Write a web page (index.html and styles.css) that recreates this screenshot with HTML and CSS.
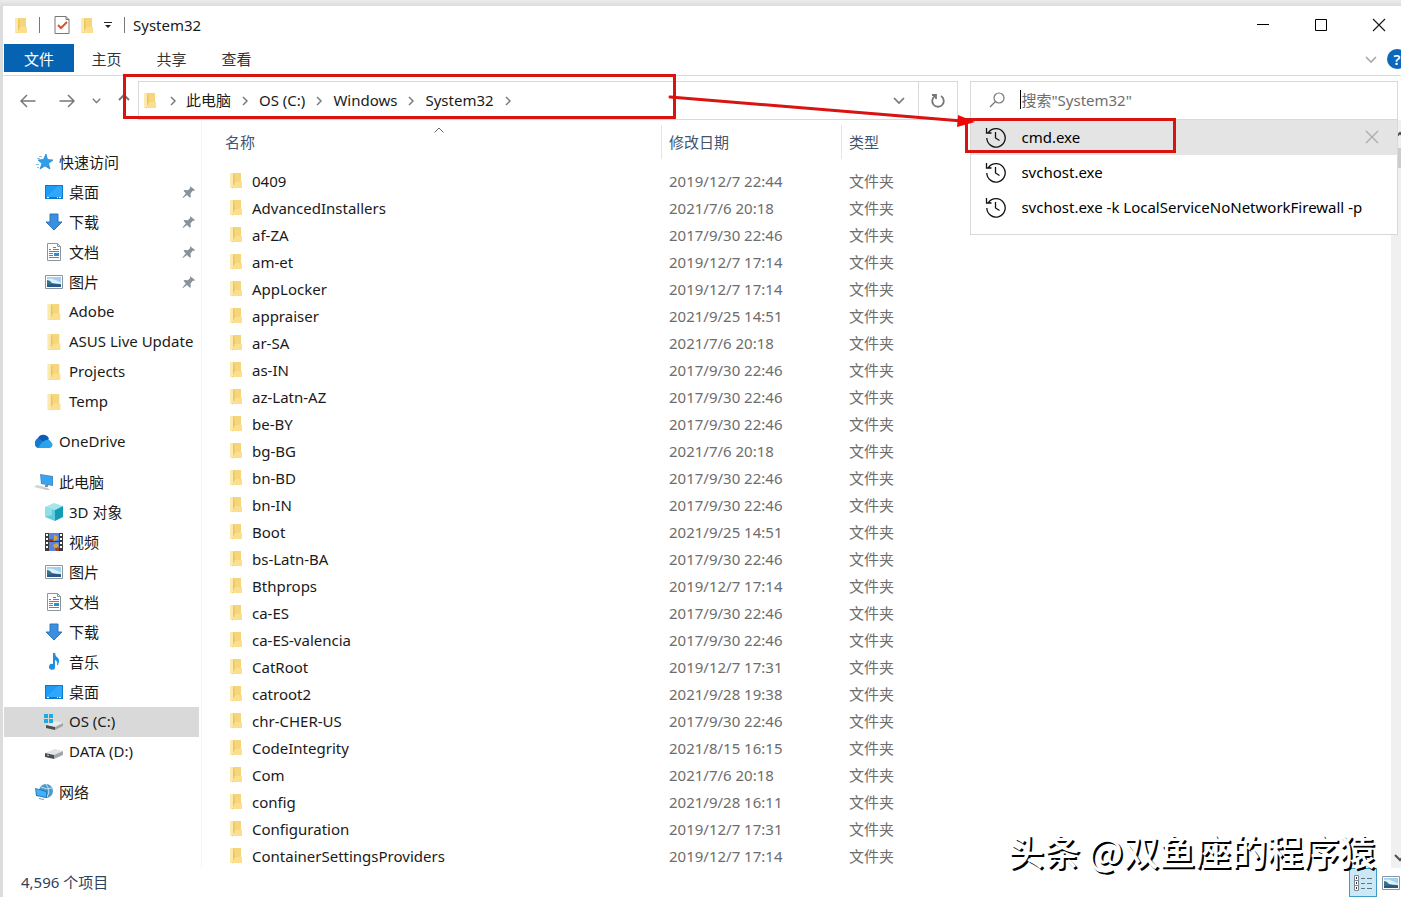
FILE: index.html
```html
<!DOCTYPE html>
<html lang="zh-CN">
<head>
    <meta charset="UTF-8">
    <meta name="viewport" content="width=device-width, initial-scale=1.0">
    <title>System32</title>
    <link rel="stylesheet" href="styles.css">
</head>
<body>
    <svg class="symbols" aria-hidden="true">
        <symbol id="folder" viewBox="0 0 12 17">
            <path d="M0 1h4l1 1v14H0z" fill="#fae7a5"/>
            <path d="M4 1h7v11H4z" fill="#f5d67c"/>
            <path d="M4 1l1 9-3 7V3z" fill="#ecc65f"/>
            <path d="M5 10h7v6H3z" fill="#fbdf8e"/>
            <path d="M0 1h3v14H0z" fill="#fbe9ad"/>
        </symbol>
        <symbol id="desktop" viewBox="0 0 18 18">
            <path d="M0 2h18v14H0z" fill="#0f78c8"/>
            <path d="M1 3h16v11H1z" fill="#1e9cf5"/>
            <path d="M1 14L13 3h4v11z" fill="#2fa8fb"/>
            <path d="M2 14h2v1H2zM12 14h1v1h-1zM14 14h2v1h-2z" fill="#fff"/>
        </symbol>
        <symbol id="download" viewBox="0 0 18 18">
            <path d="M5 1h8v8h4l-8 8-8-8h4z" fill="#3c8fdf" stroke="#2b76c2"/>
        </symbol>
        <symbol id="document" viewBox="0 0 18 18">
            <path d="M2.500.5h10l3 3v14h-13z" fill="#fff" stroke="#8a979e"/>
            <path d="M12.500.5v3h3" fill="none" stroke="#8a979e"/>
            <path d="M4 6.500h2M8 4.500h3M8 6.500h6M4 8.500h10M4 10.500h4M4 12.500h4M4 14.500h10" stroke="#3e8fc4"/>
            <path d="M9 10h5v3H9z" fill="#2b8fd8"/>
        </symbol>
        <symbol id="picture" viewBox="0 0 18 18">
            <path d="M.5 2.500h17v13H.5z" fill="#fff" stroke="#8b969c"/>
            <path d="M2 4h14v10H2z" fill="#9fd1f2"/>
            <path d="M2 6q5-2 14 4v2H2z" fill="#e1f1fa"/>
            <path d="M2 7q3 0 5 3 4 1 9 1v3H2z" fill="#37748a"/>
            <path d="M2 12q8-2 14 0v2H2z" fill="#28588a"/>
        </symbol>
        <symbol id="star" viewBox="0 0 18 18">
            <path d="M11 1l1.500 5.500 5.500.5-4.500 3.500L15 16l-5-3-5 3 2-5.500L3 7l5.500-.5z" fill="#2f9ee9" stroke="#1b83cf" stroke-width=".7"/>
            <path d="M4 3.500h3M2 5.500h3M1 11.500h3M2 14.500h2" stroke="#7cc6f4"/>
        </symbol>
        <symbol id="cloud" viewBox="0 0 20 14">
            <path d="M5 12a5 5 0 0 1-1-9 6 6 0 0 1 11 1l-8 8z" fill="#0b5cb5"/>
            <path d="M1 9a4 4 0 0 1 5-5l9 6-9 3H4a4 4 0 0 1-3-4z" fill="#1479d2"/>
            <path d="M4 13q4-7 8-8 4-1 5 2a3.300 3.300 0 0 1-1 6z" fill="#2aa3ea"/>
        </symbol>
        <symbol id="computer" viewBox="0 0 20 18">
            <path d="M6 1l13 2v10L7 11z" fill="#4a8fc4"/>
            <path d="M7 2l11 2v8L8 10z" fill="#35a5f3"/>
            <path d="M11 12h3v2h-3z" fill="#7e8c95"/>
            <path d="M3 12l11 3-2 2-12-3z" fill="#cfd4d8"/>
            <path d="M9 15l7 1-2 1z" fill="#aab2b8"/>
        </symbol>
        <symbol id="cube" viewBox="0 0 18 18">
            <path d="M9 0l9 3-8 4-10-3z" fill="#a4e6ec"/>
            <path d="M0 4l10 3v11L0 14z" fill="#5fcbd8"/>
            <path d="M10 7l8-4v11l-8 4z" fill="#149cb5"/>
            <path d="M0 4l7 2v6l-7 2z" fill="#8edfe7"/>
        </symbol>
        <symbol id="video" viewBox="0 0 18 18">
            <path d="M0 0h18v18H0z" fill="#3b3b3b"/>
            <path d="M4 0h10v8H4zM4 9h10v9H4z" fill="#5a83df"/>
            <path d="M9 2l3 1 1 3-4 2zM8 12l4-2 2 3-4 3z" fill="#d2a735"/>
            <path d="M4 6h4v2H4zM10 15h4v3h-3z" fill="#a03d2c"/>
            <path d="M1 1h2v2H1zm0 4h2v2H1zm0 4h2v2H1zm0 4h2v2H1zM15 1h2v2h-2zm0 4h2v2h-2zm0 4h2v2h-2zm0 4h2v2h-2z" fill="#fff"/>
        </symbol>
        <symbol id="music" viewBox="0 0 18 18">
            <path d="M8 0h2q0 3 3 5 2 2 0 7h-1q1-4-2-5v7a3 3 0 1 1-2-3z" fill="#1d8fe1"/>
        </symbol>
        <symbol id="drive" viewBox="0 0 20 18">
            <path d="M1 10l10-4 8 2-9 4z" fill="#e2e4e5"/>
            <path d="M1 10l9 2v4l-9-2z" fill="#4b4f52"/>
            <path d="M10 12l9-4v4l-9 4z" fill="#a3a7a9"/>
            <path d="M3 12l2 .5" stroke="#a9d99a"/>
        </symbol>
        <symbol id="osdrive" viewBox="0 0 20 18">
            <path d="M3 12l9-4 7 2-8 4z" fill="#e9ebec"/>
            <path d="M2 12l9 2v3l-9-2z" fill="#4b4f52"/>
            <path d="M11 14l8-4v3l-8 4z" fill="#a3a7a9"/>
            <path d="M0 1h4v4H0zM5 1h4v4H5zM0 6h4v4H0zM5 6h4v4H5z" fill="#19ade5"/>
        </symbol>
        <symbol id="network" viewBox="0 0 20 18">
            <circle cx="12" cy="8" r="7" fill="#4e99cb"/>
            <path d="M7 4q5 3 11 1M12 1q5 7 1 13" fill="none" stroke="#bfe0f2"/>
            <path d="M1 5l12 3v7L2 13z" fill="#1f7ec4"/>
            <path d="M2 6l10 3v5l-9-2z" fill="#42b1f6"/>
            <path d="M5 15l5 1v1l-5-1z" fill="#8996a0"/>
        </symbol>
        <symbol id="pin" viewBox="0 0 14 14">
            <path d="M8 1l5 4-1 1-1-.4-2.500 2.900.3 3.500-1 .7-2.800-2.800L1 13l-.5-.5 3.300-4L1.500 5.800l1-.9 3.300.3L8.300 3z" fill="#87929c"/>
        </symbol>
        <symbol id="chevron" viewBox="0 0 8 10">
            <path d="M2 1l4 4-4 4" fill="none" stroke="#7d7d7d" stroke-width="1.500"/>
        </symbol>
        <symbol id="chevron-down" viewBox="0 0 12 8">
            <path d="M1 1l5 5 5-5" fill="none" stroke="currentColor" stroke-width="1.700"/>
        </symbol>
        <symbol id="history" viewBox="0 0 22 22">
            <path d="M3.500 6.500A9.200 9.200 0 1 1 1.800 12M1.500 2v5h5M10.500 6v6l4 2.500" fill="none" stroke="#111" stroke-width="1.300"/>
        </symbol>
        <symbol id="cross" viewBox="0 0 14 14">
            <path d="M1 1l12 12M13 1L1 13" fill="none" stroke="currentColor" stroke-width="1.200"/>
        </symbol>
    </svg>

    <div class="window">
        <header class="titlebar">
            <svg class="folder"><use href="#folder"/></svg>
            <span class="divider"></span>
            <button class="quick" aria-label="属性">
                <svg width="16" height="18" viewBox="0 0 16 18">
                    <path d="M1 .5h11l3 3v14H1z" fill="#fff" stroke="#777"/>
                    <path d="M12 .5v3h3" fill="none" stroke="#777"/>
                    <path d="M4 9l3 3 6-6" fill="none" stroke="#d9532c" stroke-width="2"/>
                </svg>
            </button>
            <button class="quick" aria-label="新建文件夹"><svg class="folder"><use href="#folder"/></svg></button>
            <button class="quick" aria-label="自定义快速访问工具栏">
                <svg width="8" height="8" viewBox="0 0 8 8"><path d="M0 1.500h8" stroke="#222"/><path d="M1 4h6L4 7z" fill="#222"/></svg>
            </button>
            <span class="divider"></span>
            <h1>System32</h1>
            <div class="controls">
                <button aria-label="最小化"><svg width="14" height="14"><path d="M1 6.500h12" stroke="#000"/></svg></button>
                <button aria-label="最大化"><svg width="14" height="14"><path d="M1.500 1.500h11v11h-11z" fill="none" stroke="#000"/></svg></button>
                <button aria-label="关闭"><svg width="14" height="14"><use href="#cross"/></svg></button>
            </div>
        </header>

        <div class="tabs">
            <button class="tab file">文件</button>
            <button class="tab">主页</button>
            <button class="tab">共享</button>
            <button class="tab">查看</button>
            <button class="expand" aria-label="展开功能区"><svg width="14" height="8"><use href="#chevron-down"/></svg></button>
            <button class="help" aria-label="帮助">?</button>
        </div>

        <div class="navbar">
            <div class="arrows">
                <button aria-label="后退"><svg width="16" height="14"><path d="M15.500 7H1M7 1L1 7l6 6" fill="none" stroke="#777" stroke-width="1.500"/></svg></button>
                <button aria-label="前进"><svg width="16" height="14"><path d="M.5 7H15M9 1l6 6-6 6" fill="none" stroke="#777" stroke-width="1.500"/></svg></button>
                <button class="recent" aria-label="最近浏览的位置"><svg width="9" height="6"><use href="#chevron-down"/></svg></button>
                <button aria-label="上移"><svg width="12" height="14"><path d="M6 14V1M1 6l5-5 5 5" fill="none" stroke="#777" stroke-width="2"/></svg></button>
            </div>
            <div class="address">
                <svg class="folder"><use href="#folder"/></svg>
                <svg class="chevron"><use href="#chevron"/></svg>
                <a href="#">此电脑</a>
                <svg class="chevron"><use href="#chevron"/></svg>
                <a href="#">OS (C:)</a>
                <svg class="chevron"><use href="#chevron"/></svg>
                <a href="#">Windows</a>
                <svg class="chevron"><use href="#chevron"/></svg>
                <a href="#">System32</a>
                <svg class="chevron"><use href="#chevron"/></svg>
                <button class="history" aria-label="以前的位置"><svg width="12" height="8"><use href="#chevron-down"/></svg></button>
                <button class="refresh" aria-label="刷新">
                    <svg width="16" height="16"><path d="M11 3a5.800 5.800 0 1 1-6 0M2 2h4v4" fill="none" stroke="#777" stroke-width="1.800"/></svg>
                </button>
            </div>
            <div class="search">
                <label class="field">
                    <svg width="16" height="16"><circle cx="10" cy="6" r="5" fill="none" stroke="#777" stroke-width="1.200"/><path d="M6.500 9.500L1 15" stroke="#777" stroke-width="1.200"/></svg>
                    <input type="text" placeholder='搜索"System32"' aria-label="搜索">
                </label>
                <ul class="suggestions">
                    <li class="current">
                        <svg width="22" height="22"><use href="#history"/></svg>
                        <span>cmd.exe</span>
                        <button aria-label="删除"><svg width="14" height="14"><use href="#cross"/></svg></button>
                    </li>
                    <li><svg width="22" height="22"><use href="#history"/></svg><span>svchost.exe</span></li>
                    <li><svg width="22" height="22"><use href="#history"/></svg><span>svchost.exe -k LocalServiceNoNetworkFirewall -p</span></li>
                </ul>
            </div>
        </div>

        <div class="content">
            <nav class="sidebar">
                <ul>
                    <li><a class="root" href="#"><svg><use href="#star"/></svg>快速访问</a></li>
                    <li><a href="#"><svg><use href="#desktop"/></svg>桌面<svg class="pin"><use href="#pin"/></svg></a></li>
                    <li><a href="#"><svg><use href="#download"/></svg>下载<svg class="pin"><use href="#pin"/></svg></a></li>
                    <li><a href="#"><svg><use href="#document"/></svg>文档<svg class="pin"><use href="#pin"/></svg></a></li>
                    <li><a href="#"><svg><use href="#picture"/></svg>图片<svg class="pin"><use href="#pin"/></svg></a></li>
                    <li><a href="#"><svg><use href="#folder"/></svg>Adobe</a></li>
                    <li><a href="#"><svg><use href="#folder"/></svg>ASUS Live Update</a></li>
                    <li><a href="#"><svg><use href="#folder"/></svg>Projects</a></li>
                    <li><a href="#"><svg><use href="#folder"/></svg>Temp</a></li>
                </ul>
                <ul>
                    <li><a class="root" href="#"><svg><use href="#cloud"/></svg>OneDrive</a></li>
                </ul>
                <ul>
                    <li><a class="root" href="#"><svg><use href="#computer"/></svg>此电脑</a></li>
                    <li><a href="#"><svg><use href="#cube"/></svg>3D 对象</a></li>
                    <li><a href="#"><svg><use href="#video"/></svg>视频</a></li>
                    <li><a href="#"><svg><use href="#picture"/></svg>图片</a></li>
                    <li><a href="#"><svg><use href="#document"/></svg>文档</a></li>
                    <li><a href="#"><svg><use href="#download"/></svg>下载</a></li>
                    <li><a href="#"><svg><use href="#music"/></svg>音乐</a></li>
                    <li><a href="#"><svg><use href="#desktop"/></svg>桌面</a></li>
                    <li><a class="selected" href="#"><svg><use href="#osdrive"/></svg>OS (C:)</a></li>
                    <li><a href="#"><svg><use href="#drive"/></svg>DATA (D:)</a></li>
                </ul>
                <ul>
                    <li><a class="root" href="#"><svg><use href="#network"/></svg>网络</a></li>
                </ul>
            </nav>
            <main class="files">
                <table>
                    <colgroup><col class="col-name"><col class="col-date"><col></colgroup>
                    <thead>
                        <tr>
                            <th>
                                <span>名称</span>
                                <svg class="sort" width="10" height="6"><path d="M.5 5.500L5 1l4.500 4.500" fill="none" stroke="#666"/></svg>
                            </th>
                            <th><span>修改日期</span></th>
                            <th><span>类型</span></th>
                        </tr>
                    </thead>
                    <tbody id="rows"></tbody>
                </table>
            </main>
            <div class="scrollbar">
                <svg width="17" height="28"><path d="M4 18l5-5 5 5" fill="none" stroke="#505050" stroke-width="2"/></svg>
                <div class="thumb"></div>
                <svg class="down" width="17" height="18"><path d="M4 5l5 5 5-5" fill="none" stroke="#505050" stroke-width="2"/></svg>
            </div>
        </div>

        <footer class="status">
            <span>4,596 个项目</span>
            <button class="view on" aria-label="详细信息">
                <svg width="18" height="18">
                    <path d="M.5 1.500h4v15h-4zM.5 6.500h4M.5 11.500h4" fill="#fff" stroke="#7d8890"/>
                    <path d="M2 4h1M2 9h1M2 14h1" stroke="#333" stroke-width="2"/>
                    <path d="M7 4.500h4M13 4.500h5M7 9.500h4M13 9.500h5M7 14.500h4M13 14.500h5" stroke="#5f7782"/>
                </svg>
            </button>
            <button class="view" aria-label="大缩略图"><svg width="18" height="18"><use href="#picture"/></svg></button>
        </footer>
    </div>

    <svg class="marks" aria-hidden="true">
        <path d="M124.500 75.500h550v42h-550zM966.500 119.500h208v32h-208z" fill="none" stroke="#d9130f" stroke-width="3"/>
        <path d="M670 97l292 24" stroke="#d9130f" stroke-width="3" stroke-linecap="round"/>
        <path d="M958 115l17 7-18 5z" fill="#f00808"/>
    </svg>
    <div class="watermark">头条 @双鱼座的程序猿</div>

    <script src="script.js"></script>
</body>
</html>
```
FILE: styles.css
```css
* {
    box-sizing: border-box;
}
body, html {
    margin: 0;
    padding: 0;
    height: 100%;
    overflow: hidden;
}
body {
    position: relative;
    background: linear-gradient(#ececec, #dcdcdc 6px, #dcdcdc);
    font-family: "Noto Sans", "Noto Sans CJK SC", sans-serif;
    font-size: 15px;
    color: #1a1a1a;
}
button {
    padding: 0;
    border: 0;
    background: none;
    font: inherit;
    color: inherit;
    display: flex;
    align-items: center;
    justify-content: center;
}
a {
    color: inherit;
    text-decoration: none;
}
ul {
    list-style: none;
    margin: 0;
    padding: 0;
}
svg {
    display: block;
    flex: none;
}
.symbols {
    position: absolute;
    width: 0;
    height: 0;
}
.folder {
    width: 12px;
    height: 17px;
}
.window {
    height: 100%;
    padding: 6px 0 0 3px;
    display: flex;
    flex-direction: column;
    background: #fff content-box;
}

/* title bar */
.titlebar {
    height: 38px;
    flex: none;
    display: flex;
    align-items: center;
    padding-left: 12px;
    background: #fff;
}
.titlebar h1 {
    margin: 0 0 0 8px;
    font-size: 15px;
    font-weight: 400;
}
.divider {
    width: 1px;
    height: 16px;
    margin-left: 12px;
    background: #777;
}
.quick {
    margin-left: 11px;
}
.divider + .quick {
    margin-left: 14px;
}
.controls {
    margin: 0 -7px 0 auto;
    display: flex;
}
.controls button {
    width: 58px;
    height: 38px;
}

/* ribbon tabs */
.tabs {
    height: 32px;
    flex: none;
    display: flex;
    padding-left: 1px;
    border-bottom: 1px solid #dadbdc;
    color: #333;
}
.tab {
    width: 65px;
    height: 28px;
}
.tab.file {
    width: 70px;
    background: #0563b1;
    color: #fff;
}
.expand {
    margin-left: auto;
    color: #aaa;
}
.help {
    width: 20px;
    height: 20px;
    margin: 5px -6px 0 9px;
    border-radius: 50%;
    background: #0b68bb;
    color: #fff;
    font-weight: 600;
}

/* address row */
.navbar {
    height: 44px;
    flex: none;
    display: flex;
    padding: 5px 3px 0 0;
}
.arrows {
    width: 135px;
    padding-left: 17px;
    display: flex;
    align-items: center;
    gap: 23px;
}
.arrows .recent {
    color: #777;
    margin: 0 -6px;
}
.address, .search {
    border: 1px solid #d9d9d9;
    background: #fff;
}
.address {
    flex: 820 1 0;
    display: flex;
    align-items: center;
    padding-left: 5px;
}
.address a {
    padding-bottom: 2px;
}
.address .chevron {
    width: 8px;
    height: 10px;
    margin: 0 10px;
}
.address .folder + .chevron {
    margin: 0 9px 0 13px;
}
.address .history {
    margin-left: auto;
    width: 38px;
    color: #777;
}
.address .refresh {
    width: 39px;
    height: 100%;
    border-left: 1px solid #d9d9d9;
}
.search {
    position: relative;
    flex: 429 1 0;
    margin-left: 12px;
}
.field {
    height: 100%;
    display: flex;
    align-items: center;
    padding: 0 0 2px 18px;
}
.field::after {
    content: "";
    order: 1;
    width: 1px;
    height: 19px;
    margin-left: 15px;
    background: #000;
}
.field input {
    order: 2;
    flex: 1;
    min-width: 0;
    padding: 0;
    border: 0;
    outline: 0;
    font: inherit;
}
.field input::placeholder {
    color: #6d6d6d;
}
.suggestions {
    position: absolute;
    z-index: 2;
    top: 37px;
    left: -1px;
    right: -1px;
    padding-bottom: 9px;
    border: 1px solid #d9d9d9;
    background: #fff;
    color: #000;
}
.suggestions li {
    height: 35px;
    display: flex;
    align-items: center;
    gap: 14px;
    padding: 0 18px 2px 14px;
    white-space: nowrap;
}
.suggestions .current {
    background: #e4e4e4;
}
.suggestions button {
    margin-left: auto;
    color: #aaa;
}

/* folders and files */
.content {
    flex: 1;
    min-height: 0;
    display: flex;
}
.sidebar {
    width: 199px;
    flex: none;
    padding: 27px 2px 0 1px;
    border-right: 1px solid #f5f5f5;
}
.sidebar ul {
    margin-bottom: 10px;
}
.sidebar a {
    height: 30px;
    display: flex;
    align-items: center;
    gap: 5px;
    padding: 0 0 2px 40px;
    white-space: nowrap;
}
.sidebar a.root {
    padding-left: 30px;
}
.sidebar svg {
    width: 20px;
    height: 18px;
    margin-top: 2px;
}
.sidebar .pin {
    width: 14px;
    height: 14px;
    margin-left: auto;
    margin-right: 3px;
}
.sidebar .selected {
    background: #d9d9d9;
}
.files {
    flex: 1;
    min-width: 0;
    overflow: hidden;
    padding: 5px 0 0 15px;
}
table {
    width: 100%;
    table-layout: fixed;
    border-collapse: collapse;
}
.col-name {
    width: 444px;
}
.col-date {
    width: 180px;
}
th {
    position: relative;
    padding: 0 0 8px;
    font-weight: 400;
    text-align: left;
    color: #44546f;
}
th span {
    display: block;
    height: 34px;
    line-height: 34px;
    padding-left: 7px;
    border-left: 1px solid #e2e6ea;
}
th:first-child span {
    border-color: transparent;
}
.sort {
    position: absolute;
    top: 2px;
    left: calc(50% - 5px);
}
td {
    height: 27px;
    padding: 0 0 0 8px;
    color: #6d6d6d;
}
td:first-child {
    padding-left: 13px;
    color: #1a1a1a;
}
.name {
    height: 27px;
    display: flex;
    align-items: center;
    gap: 10px;
}
.scrollbar {
    width: 10px;
    flex: none;
    overflow: hidden;
    background: #f0f0f0;
    display: flex;
    flex-direction: column;
}
.thumb {
    width: 17px;
    height: 20px;
    background: #cdcdcd;
}
.scrollbar .down {
    margin-top: auto;
}

/* status bar */
.status {
    height: 29px;
    flex: none;
    display: flex;
    align-items: center;
    padding-left: 18px;
    color: #30415d;
}
.status span {
    padding-bottom: 2px;
}
.view {
    width: 20px;
    height: 29px;
    margin-left: 4px;
}
.view.on {
    width: 28px;
    margin-left: auto;
    border: 1px solid #3b9cc9;
    background: #cce8f6;
}

/* red marks and signature over the window */
.marks {
    position: absolute;
    z-index: 3;
    top: 0;
    left: 0;
    width: 100%;
    height: 100%;
    pointer-events: none;
}
.watermark {
    position: absolute;
    z-index: 4;
    right: 26px;
    bottom: 22px;
    font-family: "Noto Sans CJK SC", sans-serif;
    font-size: 36px;
    font-weight: 500;
    line-height: 50px;
    color: #fff;
    text-shadow: 2px 2px 0 #000;
    white-space: nowrap;
}
```
FILE: script.js
```js
const files = [
    ['0409', '2019/12/7 22:44'],
    ['AdvancedInstallers', '2021/7/6 20:18'],
    ['af-ZA', '2017/9/30 22:46'],
    ['am-et', '2019/12/7 17:14'],
    ['AppLocker', '2019/12/7 17:14'],
    ['appraiser', '2021/9/25 14:51'],
    ['ar-SA', '2021/7/6 20:18'],
    ['as-IN', '2017/9/30 22:46'],
    ['az-Latn-AZ', '2017/9/30 22:46'],
    ['be-BY', '2017/9/30 22:46'],
    ['bg-BG', '2021/7/6 20:18'],
    ['bn-BD', '2017/9/30 22:46'],
    ['bn-IN', '2017/9/30 22:46'],
    ['Boot', '2021/9/25 14:51'],
    ['bs-Latn-BA', '2017/9/30 22:46'],
    ['Bthprops', '2019/12/7 17:14'],
    ['ca-ES', '2017/9/30 22:46'],
    ['ca-ES-valencia', '2017/9/30 22:46'],
    ['CatRoot', '2019/12/7 17:31'],
    ['catroot2', '2021/9/28 19:38'],
    ['chr-CHER-US', '2017/9/30 22:46'],
    ['CodeIntegrity', '2021/8/15 16:15'],
    ['Com', '2021/7/6 20:18'],
    ['config', '2021/9/28 16:11'],
    ['Configuration', '2019/12/7 17:31'],
    ['ContainerSettingsProviders', '2019/12/7 17:14']
];

document.getElementById('rows').innerHTML = files.map(([name, date]) => `
    <tr>
        <td><div class="name"><svg class="folder"><use href="#folder"/></svg>${name}</div></td>
        <td>${date}</td>
        <td>文件夹</td>
    </tr>`).join('');
```
